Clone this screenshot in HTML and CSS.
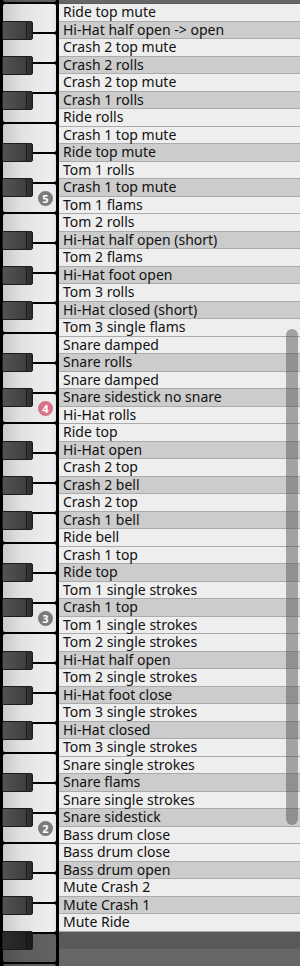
FILE: index.html
```html
<!DOCTYPE html>
<html>
    <head lang="en">
        <meta charset="UTF-8">
        <title>Drum map</title>
        <link rel="stylesheet" href="styles.css">
    </head>
    <body>
    <div id="editor">
        <div id="keys"></div>
        <div id="names"></div>
        <div class="scrollbar"></div>
    </div>
    <script>
            var names = [
                "Ride top mute", "Hi-Hat half open -> open", "Crash 2 top mute", "Crash 2 rolls",
                "Crash 2 top mute", "Crash 1 rolls", "Ride rolls", "Crash 1 top mute",
                "Ride top mute", "Tom 1 rolls", "Crash 1 top mute", "Tom 1 flams",
                "Tom 2 rolls", "Hi-Hat half open (short)", "Tom 2 flams", "Hi-Hat foot open",
                "Tom 3 rolls", "Hi-Hat closed (short)", "Tom 3 single flams", "Snare damped",
                "Snare rolls", "Snare damped", "Snare sidestick no snare", "Hi-Hat rolls",
                "Ride top", "Hi-Hat open", "Crash 2 top", "Crash 2 bell",
                "Crash 2 top", "Crash 1 bell", "Ride bell", "Crash 1 top",
                "Ride top", "Tom 1 single strokes", "Crash 1 top", "Tom 1 single strokes",
                "Tom 2 single strokes", "Hi-Hat half open", "Tom 2 single strokes", "Hi-Hat foot close",
                "Tom 3 single strokes", "Hi-Hat closed", "Tom 3 single strokes", "Snare single strokes",
                "Snare flams", "Snare single strokes", "Snare sidestick", "Bass drum close",
                "Bass drum close", "Bass drum open", "Mute Crash 2", "Mute Crash 1",
                "Mute Ride"
            ];
            var iHigh = 83; // B5, first named note
            var iLow = iHigh - names.length + 1;
            var isBlack = [false,true,false,true,false,false,true,false,true,false,true,false];

            // note names, one row per midi note, top = highest
            var oNames = document.getElementById("names");
            for(var n=84;n>=26;n--){
                var oRow = document.createElement("div");
                oRow.className = "row" + (isBlack[n%12]?" b":"") + (n>iHigh||n<iLow?" off":"");
                if(n<=iHigh && n>=iLow){
                    oRow.textContent = names[iHigh-n];
                }
                oNames.appendChild(oRow);
            }

            // piano keys, octave by octave
            var oKeys = document.getElementById("keys");
            var aWhite = [11,9,7,5,4,2,0];
            var aBlack = {10:"as",8:"gs",6:"fs",3:"ds",1:"cs"};
            for(var o=6;o>=1;o--){
                var oOct = document.createElement("div");
                oOct.className = "octave";
                var base = (o+1)*12;
                for(var i=0;i<aWhite.length;i++){
                    var w = document.createElement("div");
                    var note = base+aWhite[i];
                    w.className = "white" + (note>iHigh||note<iLow?" off":"");
                    if(aWhite[i]==0 && o>=2 && o<=5){
                        var num = document.createElement("span");
                        num.className = "num" + (o==4?" middle":"");
                        num.textContent = o;
                        w.appendChild(num);
                    }
                    oOct.appendChild(w);
                }
                for(var k in aBlack){
                    var b = document.createElement("div");
                    var bn = base+parseInt(k);
                    b.className = "black " + aBlack[k] + (bn>iHigh||bn<iLow?" off":"");
                    oOct.appendChild(b);
                }
                oKeys.appendChild(oOct);
            }
    </script>
    </body>
</html>
```
FILE: styles.css
```css
*{
    margin:0;
    padding:0;
}
body{
    background:#000;
    font-family:"Noto Sans", "Open Sans", sans-serif;
}
#editor{
    display:flex;
    height:966px;
    overflow:hidden;
    position:relative;
    background:#000;
}
#keys{
    flex:none;
    width:53px;
    padding:0 3px;
}
#keys .octave{
    position:relative;
}
#keys .octave:first-child{
    margin-top:-206px;
}
.white{
    height:28px;
    margin-bottom:2px;
    border-radius:2px;
    background:linear-gradient(to right, #c9c9c9, #e2e2e2 35%, #eeeeee 90%, #e6e6e6);
    display:flex;
    align-items:center;
    justify-content:flex-end;
    padding-right:3px;
    box-sizing:border-box;
}
.white.off{
    background:linear-gradient(to right, #4f4f4f, #5c5c5c 35%, #626262);
}
.num{
    width:15px;
    height:15px;
    border-radius:50%;
    background:#7b7b7b;
    color:#fff;
    font-size:11px;
    font-weight:bold;
    line-height:15px;
    text-align:center;
}
.num.middle{
    background:#d9718a;
}
.black{
    position:absolute;
    left:-1px;
    width:31px;
    height:19px;
    box-sizing:border-box;
    border:1px solid #1c1c1c;
    border-radius:2px;
    background:linear-gradient(to right, #535353, #3f3f3f 23px, #1e1e1e 23px, #1e1e1e 24px, #363636 24px, #2c2c2c);
}
.black.off{
    background:linear-gradient(to right, #2c2c2c, #222 23px, #111 23px, #111 24px, #1e1e1e 24px, #181818);
}
.black.as{ top:16.5px; }
.black.gs{ top:51.5px; }
.black.fs{ top:86.5px; }
.black.ds{ top:139px; }
.black.cs{ top:174px; }
#names{
    flex:1;
    margin-top:-13.5px;
}
.row{
    height:17.5px;
    box-sizing:border-box;
    border-bottom:1px solid #ababab;
    background:#eeeeee;
    color:#111;
    font-size:14px;
    line-height:16px;
    padding-left:4px;
    white-space:nowrap;
}
.row.b{
    background:#cccccc;
}
.row.off{
    background:#676767;
    border-bottom-color:#5c5c5c;
}
.row.b.off{
    background:#595959;
}
.scrollbar{
    position:absolute;
    right:2px;
    top:329px;
    width:12px;
    height:496px;
    border-radius:6px;
    background:rgba(70,70,70,.45);
}
```
